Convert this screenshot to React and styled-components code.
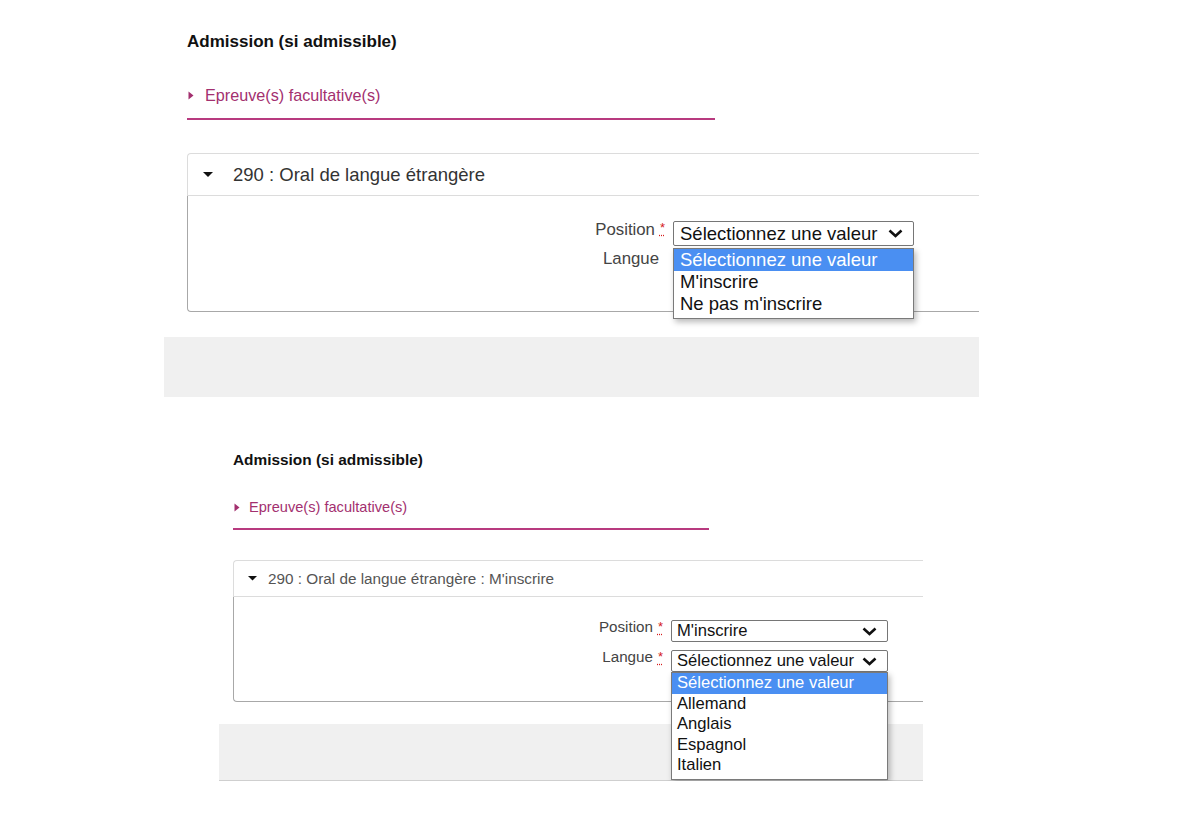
import React from "react";
import styled, { createGlobalStyle } from "styled-components";

const GlobalStyle = createGlobalStyle`
  body {
    margin: 0;
    background: #fff;
    font-family: "Liberation Sans", Arial, sans-serif;
  }
`;

// the two screenshots were taken at different zoom levels
const large = {
  left: 164, width: 815, indent: 23,
  headTop: 32, heading: 17, headingLh: 20,
  linkGap: 33, link: 16.2, linkLh: 20, linkPad: 13, linkIcon: 11, rule: 2, ruleWidth: 528,
  panelGap: 33, headerH: 41, header: 18.5, headerColor: "#333",
  caretLeft: 15, caretW: 10, caretGap: 20,
  bodyPadTop: 25, bodyPadBottom: 36, rowGap: 4,
  labelCol: 477, label: 16.8, selectW: 241, selectH: 25, select: 18.5, selectPad: 6,
  optionLh: 22, dropGap: 2,
  bandGap: 25, bandH: 60, bandLine: false,
};

const small = {
  left: 219, width: 704, indent: 14,
  headTop: 54, heading: 15.4, headingLh: 18,
  linkGap: 29, link: 14.6, linkLh: 18, linkPad: 12, linkIcon: 9, rule: 2, ruleWidth: 476,
  panelGap: 30, headerH: 35, header: 15.3, headerColor: "#555",
  caretLeft: 14, caretW: 9, caretGap: 11,
  bodyPadTop: 23, bodyPadBottom: 29, rowGap: 8,
  labelCol: 429, label: 15.2, selectW: 217, selectH: 22, select: 16.6, selectPad: 5,
  optionLh: 20.5, dropGap: 0,
  bandGap: 22, bandH: 56, bandLine: true,
};

const Section = styled.section`
  margin-left: ${(p) => p.$s.left}px;
  width: ${(p) => p.$s.width}px;
  padding-top: ${(p) => p.$s.headTop}px;
`;

const Content = styled.div`
  padding-left: ${(p) => p.$s.indent}px;
`;

const Heading = styled.h3`
  margin: 0;
  font-size: ${(p) => p.$s.heading}px;
  line-height: ${(p) => p.$s.headingLh}px;
  font-weight: bold;
  color: #111;
`;

const Toggle = styled.div`
  box-sizing: border-box;
  display: flex;
  align-items: center;
  gap: ${(p) => p.$s.linkIcon}px;
  width: ${(p) => p.$s.ruleWidth}px;
  margin-top: ${(p) => p.$s.linkGap}px;
  padding-left: 1px;
  padding-bottom: ${(p) => p.$s.linkPad}px;
  border-bottom: ${(p) => p.$s.rule}px solid #b83a7f;
  color: #a3306f;
  font-size: ${(p) => p.$s.link}px;
  line-height: ${(p) => p.$s.linkLh}px;
`;

const Panel = styled.div`
  margin-top: ${(p) => p.$s.panelGap}px;
`;

const PanelHeader = styled.div`
  display: flex;
  align-items: center;
  height: ${(p) => p.$s.headerH}px;
  padding-left: ${(p) => p.$s.caretLeft}px;
  gap: ${(p) => p.$s.caretGap}px;
  border: 1px solid #dcdcdc;
  border-right: none;
  border-radius: 4px 0 0 0;
  font-size: ${(p) => p.$s.header}px;
  color: ${(p) => p.$s.headerColor};
`;

const PanelBody = styled.div`
  display: flex;
  flex-direction: column;
  gap: ${(p) => p.$s.rowGap}px;
  padding: ${(p) => p.$s.bodyPadTop}px 0 ${(p) => p.$s.bodyPadBottom}px;
  border-left: 1px solid #a8a8a8;
  border-bottom: 1px solid #a8a8a8;
  border-radius: 0 0 0 4px;
`;

const Row = styled.div`
  display: grid;
  grid-template-columns: ${(p) => p.$s.labelCol}px ${(p) => p.$s.selectW}px;
  column-gap: 8px;
  align-items: start;
`;

const Label = styled.label`
  justify-self: end;
  display: flex;
  gap: 5px;
  padding-right: ${(p) => (p.$required ? 0 : 6)}px;
  font-size: ${(p) => p.$s.label}px;
  line-height: ${(p) => p.$s.selectH - 8}px;
  color: #444;
`;

const Star = styled.abbr`
  color: #d41b1b;
  font-size: 13px;
  line-height: 13px;
  text-decoration: underline dotted #d41b1b;
  text-underline-offset: 3px;
`;

const SelectWrap = styled.div`
  position: relative;
`;

const SelectBox = styled.div`
  box-sizing: border-box;
  display: flex;
  align-items: center;
  justify-content: space-between;
  height: ${(p) => p.$s.selectH}px;
  padding: 0 10px 0 ${(p) => p.$s.selectPad}px;
  border: 1px solid #767676;
  border-radius: 2px;
  background: #fff;
  color: #111;
  font-size: ${(p) => p.$s.select}px;
  white-space: nowrap;
`;

const Dropdown = styled.ul`
  position: absolute;
  z-index: 2;
  top: calc(100% + ${(p) => p.$s.dropGap}px);
  left: 0;
  width: 100%;
  box-sizing: border-box;
  margin: 0;
  padding: 0 0 3px;
  list-style: none;
  background: #fff;
  border: 1px solid #7a7a7a;
  box-shadow: 2px 3px 6px rgba(0, 0, 0, 0.28);
`;

const Option = styled.li`
  padding: 0 ${(p) => p.$s.selectPad}px;
  font-size: ${(p) => p.$s.select}px;
  line-height: ${(p) => p.$s.optionLh}px;
  color: ${(p) => (p.$active ? "#fff" : "#111")};
  background: ${(p) => (p.$active ? "#4a8ff2" : "transparent")};
  white-space: nowrap;
`;

const Band = styled.div`
  margin-top: ${(p) => p.$s.bandGap}px;
  height: ${(p) => p.$s.bandH}px;
  background: #f0f0f0;
  border-bottom: ${(p) => (p.$s.bandLine ? "1px solid #cfcfcf" : "none")};
`;

const Chevron = () => (
  <svg width="15" height="9" viewBox="0 0 15 9">
    <path d="M1.5 1.5 L7.5 7 L13.5 1.5" fill="none" stroke="#111" strokeWidth="2.6" />
  </svg>
);

const CaretRight = () => (
  <svg width="6" height="9" viewBox="0 0 6 9">
    <path d="M0.5 0.5 L5.5 4.5 L0.5 8.5 Z" fill="#a3306f" />
  </svg>
);

const CaretDown = ({ w }) => (
  <svg width={w} height={w / 2} viewBox="0 0 10 5">
    <path d="M0 0 L10 0 L5 5 Z" fill="#111" />
  </svg>
);

function Select({ s, value, options }) {
  return (
    <SelectWrap>
      <SelectBox $s={s}>
        <span>{value}</span>
        <Chevron />
      </SelectBox>
      {options && (
        <Dropdown $s={s}>
          {options.map((o, i) => (
            <Option key={o} $s={s} $active={i === 0}>
              {o}
            </Option>
          ))}
        </Dropdown>
      )}
    </SelectWrap>
  );
}

function Field({ s, label, required, children }) {
  return (
    <Row $s={s}>
      <Label $s={s} $required={required}>
        <span>{label}</span>
        {required && <Star title="obligatoire">*</Star>}
      </Label>
      {children}
    </Row>
  );
}

function Block({ s, title, fields }) {
  return (
    <Section $s={s}>
      <Content $s={s}>
        <Heading $s={s}>Admission (si admissible)</Heading>
        <Toggle $s={s}>
          <CaretRight />
          <span>Epreuve(s) facultative(s)</span>
        </Toggle>
        <Panel $s={s}>
          <PanelHeader $s={s}>
            <CaretDown w={s.caretW} />
            <span>{title}</span>
          </PanelHeader>
          <PanelBody $s={s}>
            {fields.map((f) => (
              <Field key={f.label} s={s} label={f.label} required={f.required}>
                <Select s={s} value={f.value} options={f.options} />
              </Field>
            ))}
          </PanelBody>
        </Panel>
      </Content>
      <Band $s={s} />
    </Section>
  );
}

const placeholder = "Sélectionnez une valeur";

export default function App() {
  return (
    <>
      <GlobalStyle />
      <Block
        s={large}
        title="290 : Oral de langue étrangère"
        fields={[
          {
            label: "Position",
            required: true,
            value: placeholder,
            options: [placeholder, "M'inscrire", "Ne pas m'inscrire"],
          },
          { label: "Langue", required: false, value: placeholder },
        ]}
      />
      <Block
        s={small}
        title="290 : Oral de langue étrangère : M'inscrire"
        fields={[
          { label: "Position", required: true, value: "M'inscrire" },
          {
            label: "Langue",
            required: true,
            value: placeholder,
            options: [placeholder, "Allemand", "Anglais", "Espagnol", "Italien"],
          },
        ]}
      />
    </>
  );
}
